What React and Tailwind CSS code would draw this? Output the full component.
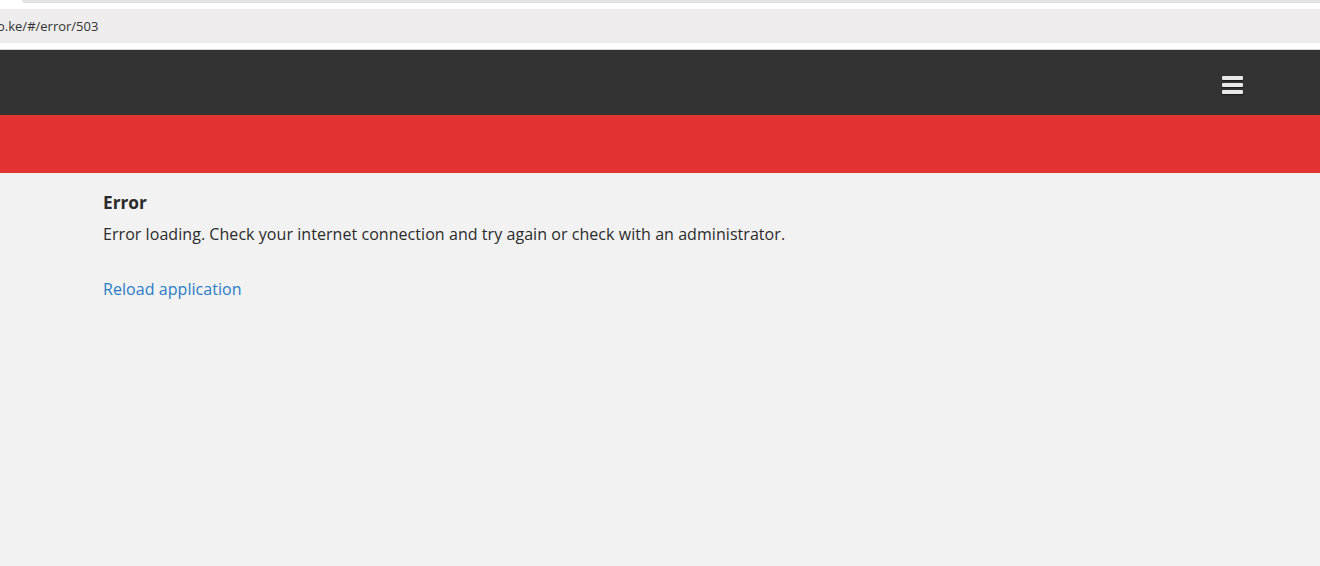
export default function App() {
  return (
    <div className="flex h-[566px] w-[1320px] flex-col overflow-hidden bg-[#f2f2f2] font-['Open_Sans',sans-serif]">
      {/* browser chrome */}
      <div className="h-[49px] shrink-0 bg-white">
        <div className="ml-[22px] h-[3px] rounded-bl-[6px] bg-[#e3e3e3]" />
        <div className="mt-[6px] flex h-[34px] items-center overflow-hidden bg-[#eeeced] pt-[2px]">
          <span className="-ml-[3px] text-[13px] text-[#333]">o.ke/#/error/503</span>
        </div>
      </div>
      <div className="h-px shrink-0 bg-[#d9d9d9]" />

      {/* nav bar */}
      <div className="flex h-[65px] shrink-0 items-center justify-end bg-[#333333] pr-[77px]">
        <div className="flex w-[21px] flex-col gap-[3px] pt-[5px]">
          <span className="h-[4px] rounded-[1px] bg-[#e8e8e8] shadow-[0_1px_1px_rgba(0,0,0,0.5)]" />
          <span className="h-[4px] rounded-[1px] bg-[#e8e8e8] shadow-[0_1px_1px_rgba(0,0,0,0.5)]" />
          <span className="h-[4px] rounded-[1px] bg-[#e8e8e8] shadow-[0_1px_1px_rgba(0,0,0,0.5)]" />
        </div>
      </div>
      <div className="h-[58px] shrink-0 bg-[#e33232]" />

      {/* content */}
      <div className="flex flex-col pl-[103px] pt-[18px] text-[#2b2b2b]">
        <h1 className="text-[17.3px] font-bold leading-[24px]">Error</h1>
        <p className="mt-[8px] text-[16px] leading-[22px] tracking-[0.055px]">
          Error loading. Check your internet connection and try again or check with an administrator.
        </p>
        <a href="#" className="mt-[33px] text-[16px] leading-[22px] tracking-[0.055px] text-[#2b7cc6]">
          Reload application
        </a>
      </div>
    </div>
  );
}
